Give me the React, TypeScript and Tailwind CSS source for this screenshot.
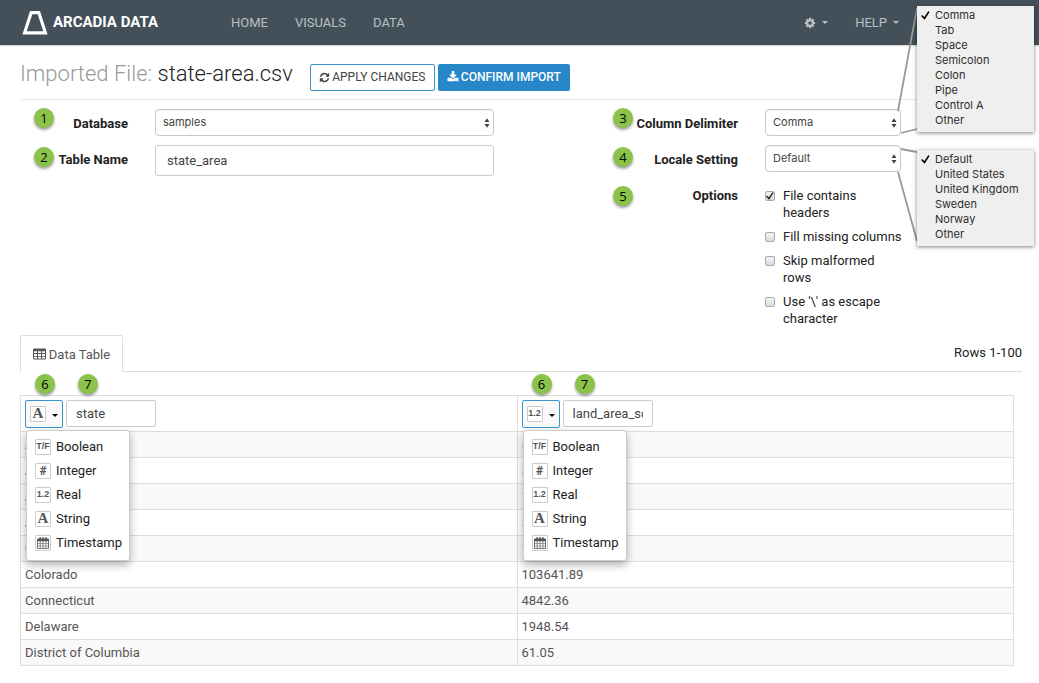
import React from "react";

const GEAR =
  "M1152 896q0-106-75-181t-181-75-181 75-75 181 75 181 181 75 181-75 75-181zm512-109v222q0 12-8 23t-20 13l-185 28q-19 54-39 91 35 50 107 138 10 12 10 25t-9 23q-27 37-99 108t-94 71q-12 0-26-9l-138-108q-44 23-91 38-16 136-29 186-7 28-36 28h-222q-14 0-24.5-8.5t-11.5-21.5l-28-184q-49-16-90-37l-141 107q-10 9-25 9-14 0-25-11-126-114-165-168-7-10-7-23 0-12 8-23 15-21 51-66.5t54-70.5q-27-50-41-99l-183-27q-13-2-21-12.5t-8-23.5v-222q0-12 8-23t19-13l186-28q14-46 39-92-40-57-107-138-10-12-10-24 0-10 9-23 26-36 98.5-107.5t94.5-71.5q13 0 26 10l138 107q44-23 91-38 16-136 29-186 7-28 36-28h222q14 0 24.5 8.5t11.5 21.5l28 184q49 16 90 37l142-107q9-9 24-9 13 0 25 10 129 119 165 170 7 8 7 22 0 12-8 23-15 21-51 66.5t-54 70.5q26 50 41 98l183 28q13 2 21 12.5t8 23.5z";
const REFRESH =
  "M1639 1056q0 5-1 7-64 268-268 434.5t-478 166.5q-146 0-282.5-55t-243.5-157l-129 129q-19 19-45 19t-45-19-19-45v-448q0-26 19-45t45-19h448q26 0 45 19t19 45-19 45l-137 137q71 66 161 102t187 36q134 0 250-65t186-179q11-17 53-117 8-23 30-23h192q13 0 22.5 9.5t9.5 22.5zm25-800v448q0 26-19 45t-45 19h-448q-26 0-45-19t-19-45 19-45l138-138q-148-137-349-137-134 0-250 65t-186 179q-11 17-53 117-8 23-30 23h-199q-13 0-22.5-9.5t-9.5-22.5v-7q65-268 270-434.5t480-166.5q146 0 284 55.5t245 156.5l130-129q19-19 45-19t45 19 19 45z";
const DOWNLOAD =
  "M1344 1344q0-26-19-45t-45-19-45 19-19 45 19 45 45 19 45-19 19-45zm256 0q0-26-19-45t-45-19-45 19-19 45 19 45 45 19 45-19 19-45zm128-224v320q0 40-28 68t-68 28h-1472q-40 0-68-28t-28-68v-320q0-40 28-68t68-28h465l135 136q58 56 136 56t136-56l136-136h464q40 0 68 28t28 68zm-325-569q17 41-14 70l-448 448q-18 19-45 19t-45-19l-448-448q-31-29-14-70 17-39 59-39h256v-448q0-26 19-45t45-19h256q26 0 45 19t19 45v448h256q42 0 59 39z";

function Glyph({ d, className }: { d: string; className: string }) {
  return (
    <svg viewBox="0 0 1792 1792" fill="currentColor" className={className} aria-hidden="true">
      <path d={d} />
    </svg>
  );
}

function Caret({ className }: { className: string }) {
  return (
    <svg viewBox="0 0 6 3" fill="currentColor" className={className} aria-hidden="true">
      <path d="M0 0h6L3 3z" />
    </svg>
  );
}

function Tick({ className }: { className: string }) {
  return (
    <svg viewBox="0 0 10 10" fill="none" stroke="currentColor" strokeWidth="1.8" className={className} aria-hidden="true">
      <path d="M1.3 5.6 3.8 8.4 8.4 1.2" strokeLinecap="round" strokeLinejoin="round" />
    </svg>
  );
}

function TableIcon() {
  return (
    <svg viewBox="0 0 13 12" className="h-3 w-[13px]" aria-hidden="true">
      <path
        fill="currentColor"
        fillRule="evenodd"
        d="M1 .5h11a1 1 0 0 1 1 1v9a1 1 0 0 1-1 1H1a1 1 0 0 1-1-1v-9a1 1 0 0 1 1-1zM1 3.2v1.9h3V3.2zm4 0v1.9h3V3.2zm4 0v1.9h3V3.2zM1 6v1.9h3V6zm4 0v1.9h3V6zm4 0v1.9h3V6zM1 8.8v1.8h3V8.800zm4 0v1.800h3V8.800zm4 0v1.800h3V8.800z"
      />
    </svg>
  );
}

function CalendarIcon() {
  return (
    <svg viewBox="0 0 12 12" className="h-3 w-3" aria-hidden="true">
      <path
        fill="currentColor"
        fillRule="evenodd"
        d="M2.300.8a.8.8 0 0 1 1.600 0v.8h1.300V.8a.8.8 0 0 1 1.600 0v.8h1.300V.8a.8.8 0 0 1 1.600 0v.8H11a1 1 0 0 1 1 1V11a1 1 0 0 1-1 1H1a1 1 0 0 1-1-1V2.600a1 1 0 0 1 1-1h1.300zM.8 4.300v1.900h2V4.300zm2.700 0v1.900h2.200V4.300zm2.900 0v1.900h2.200V4.300zm2.900 0v1.900h1.900V4.300zM.8 6.800v1.900h2V6.800zm2.700 0v1.900h2.200V6.800zm2.900 0v1.900h2.200V6.800zm2.900 0v1.900h1.900V6.800zM.8 9.300v1.900h2V9.300zm2.700 0v1.900h2.200V9.300zm2.900 0v1.900h2.200V9.300zm2.900 0v1.900h1.900V9.300z"
      />
    </svg>
  );
}

function Badge({ n }: { n: number }) {
  return (
    <span className="flex size-5 shrink-0 items-center justify-center rounded-full bg-[#8bc34a] font-['Open_Sans',sans-serif] text-[13px] font-normal leading-5 text-black shadow-[0_2px_3px_rgba(0,0,0,0.4)]">
      {n}
    </span>
  );
}

function Select({ id, options }: { id: string; options: string[] }) {
  return (
    <div className="relative">
      <select
        id={id}
        className="block h-[27px] w-full appearance-none rounded-[4px] border border-[#c8c8c8] bg-white pl-[7px] pr-5 font-[Inter,sans-serif] text-[11px] text-[#444] shadow-[inset_0_1px_1px_rgba(0,0,0,0.06)]"
      >
        {options.map((o) => (
          <option key={o}>{o}</option>
        ))}
      </select>
      <svg viewBox="0 0 6 10" fill="#444" className="pointer-events-none absolute right-1 top-[9px] h-2.5 w-1.5" aria-hidden="true">
        <path d="M.5 4h5L3 .2zM.5 6h5L3 9.800z" />
      </svg>
    </div>
  );
}

function Popup({ options }: { options: string[] }) {
  return (
    <ul className="w-[117px] bg-[#efefef] pb-1 pt-0.5 font-[Inter,sans-serif] text-[11px] leading-[15px] text-[#2d2d2d] shadow-[0_1px_4px_rgba(0,0,0,0.5)]">
      {options.map((o, i) => (
        <li key={o} className="flex h-[15px] items-center pl-1">
          <span className="w-3.5">{i === 0 && <Tick className="size-[9px] text-black" />}</span>
          {o}
        </li>
      ))}
    </ul>
  );
}

const delimiters = ["Comma", "Tab", "Space", "Semicolon", "Colon", "Pipe", "Control A", "Other"];
const locales = ["Default", "United States", "United Kingdom", "Sweden", "Norway", "Other"];

const checks = [
  { label: "File contains headers", on: true },
  { label: "Fill missing columns", on: false },
  { label: "Skip malformed rows", on: false },
  { label: "Use '\\' as escape character", on: false },
];

type Kind = "Boolean" | "Integer" | "Real" | "String" | "Timestamp";
const kinds: Kind[] = ["Boolean", "Integer", "Real", "String", "Timestamp"];

function KindIcon({ kind }: { kind: Kind }) {
  return (
    <span className="flex size-4 shrink-0 items-center justify-center rounded-[1px] border border-[#ccc] bg-white leading-none text-[#555]">
      {kind === "Boolean" && <span className="font-['Liberation_Sans_Narrow','Liberation_Sans',sans-serif] text-[9px] font-bold">T/F</span>}
      {kind === "Integer" && <span className="text-xs font-bold">#</span>}
      {kind === "Real" && <span className="font-['Liberation_Sans_Narrow','Liberation_Sans',sans-serif] text-[9px] font-bold">1.2</span>}
      {kind === "String" && <span className="font-['Liberation_Serif',serif] text-[15px] font-bold">A</span>}
      {kind === "Timestamp" && <CalendarIcon />}
    </span>
  );
}

function ColumnHead({ kind, name }: { kind: Kind; name: string }) {
  return (
    <div className="relative flex items-center gap-[3px]">
      <div className="absolute -top-[26px] left-2.5 flex gap-[23px]">
        <Badge n={6} />
        <Badge n={7} />
      </div>
      <button
        type="button"
        aria-label={`Type of ${name}`}
        className="flex h-7 w-[38px] items-center gap-1.5 rounded-[2px] border border-[#3a94d0] bg-[#fafafa] pl-1"
      >
        <KindIcon kind={kind} />
        <Caret className="mt-1 h-[3px] w-1.5 text-black" />
      </button>
      <input
        aria-label="Column name"
        defaultValue={name}
        className="h-[27px] w-[90px] rounded-[2px] border border-[#ccc] bg-white px-[9px] text-[13px] font-normal text-[#444]"
      />
      <ul className="absolute left-px top-full z-10 mt-0.5 flex w-[104px] flex-col gap-2 rounded-[3px] border border-[#ccc] bg-white pb-[9px] pt-2 pl-2 shadow-[0_4px_8px_rgba(0,0,0,0.3)]">
        {kinds.map((k) => (
          <li key={k} className="flex h-4 items-center gap-[5px] text-[13px] font-normal text-[#222]">
            <KindIcon kind={k} />
            {k}
          </li>
        ))}
      </ul>
    </div>
  );
}

const rows = [
  ["Alabama", "50645.33"],
  ["Alaska", "570640.95"],
  ["Arizona", "113594.08"],
  ["Arkansas", "52035.48"],
  ["California", "155779.22"],
  ["Colorado", "103641.89"],
  ["Connecticut", "4842.36"],
  ["Delaware", "1948.54"],
  ["District of Columbia", "61.05"],
];

export default function App() {
  return (
    <div className="min-h-screen bg-white font-[Roboto,sans-serif] text-[13px] leading-[17px] text-[#222]">
      <header className="flex h-[45px] items-center bg-[#435059] pl-[22px] text-[13px] text-[#b9c0c4] shadow-[0_1px_1px_rgba(0,0,0,0.15)]">
        <a href="#" className="flex w-[209px] items-center gap-[5px] text-[15px] font-bold text-white">
          <svg viewBox="0 0 26 26" fill="none" stroke="currentColor" className="size-[26px]" aria-hidden="true">
            <path d="M9.200 2.600h7.600l6.600 20.200H2.600z" strokeWidth="3.200" />
          </svg>
          ARCADIA DATA
        </a>
        <nav className="flex flex-1 gap-[27px]">
          <a href="#">HOME</a>
          <a href="#">VISUALS</a>
          <a href="#">DATA</a>
        </nav>
        <div className="flex items-center gap-[27px] pr-[140px]">
          <button type="button" aria-label="Settings" className="flex items-center gap-1.5">
            <Glyph d={GEAR} className="size-3" />
            <Caret className="h-[3px] w-1.5" />
          </button>
          <button type="button" className="flex items-center gap-1.5">
            HELP
            <Caret className="h-[3px] w-1.5" />
          </button>
        </div>
      </header>

      <main className="pl-5 pr-[17px]">
        <div className="flex h-[55px] items-center border-b border-[#eaeaea]">
          <h1 className="mr-[17px] mt-1 text-[22px] font-light leading-7 text-[#999]">
            Imported File: <span className="text-[#222]">state-area.csv</span>
          </h1>
          <div className="mt-2.5 flex gap-[3px] text-xs">
            <button type="button" className="flex h-[27px] w-[125px] items-center justify-center gap-0.5 rounded-[2px] border border-[#3a94d0] text-[#444]">
              <Glyph d={REFRESH} className="size-[11px]" />
              APPLY CHANGES
            </button>
            <button type="button" className="flex h-[27px] w-[132px] items-center justify-center gap-0.5 rounded-[2px] bg-[#2787c8] font-medium text-white">
              <Glyph d={DOWNLOAD} className="size-3" />
              CONFIRM IMPORT
            </button>
          </div>
        </div>

        <form className="flex pt-2">
          <section className="flex flex-1 pl-3.5">
            <div className="flex flex-col gap-[19px]">
              <Badge n={1} />
              <Badge n={2} />
            </div>
            <div className="flex-1">
              <div className="flex h-9 gap-[27px]">
                <label htmlFor="database" className="mt-[7px] w-[74px] text-right font-bold">Database</label>
                <div className="mt-px flex-1">
                  <Select id="database" options={["samples"]} />
                </div>
              </div>
              <div className="flex h-9 gap-[27px]">
                <label htmlFor="table-name" className="mt-[7px] w-[74px] text-right font-bold">Table Name</label>
                <input
                  id="table-name"
                  defaultValue="state_area"
                  className="mt-px h-[31px] min-w-0 flex-1 rounded-[3px] border border-[#ccc] bg-white px-[11px] text-[13px] text-[#444]"
                />
              </div>
            </div>
          </section>

          <section className="ml-[119px] flex w-[409px]">
            <div className="flex flex-col gap-[19px]">
              <Badge n={3} />
              <Badge n={4} />
              <Badge n={5} />
            </div>
            <div>
              <div className="flex h-9 gap-[27px]">
                <label htmlFor="delimiter" className="mt-[7px] w-[105px] text-right font-bold">Column Delimiter</label>
                <div className="relative mt-px w-[136px]">
                  <Select id="delimiter" options={delimiters} />
                  <div className="absolute -top-[103px] left-full z-10 flex items-start">
                    <svg viewBox="0 0 16 128" fill="none" stroke="#999" strokeWidth="1.800" className="h-32 w-4 overflow-visible" aria-hidden="true">
                      <path d="M-3 105 16 2M0 127l16-4" />
                    </svg>
                    <Popup options={delimiters} />
                  </div>
                </div>
              </div>
              <div className="flex h-9 gap-[27px]">
                <label htmlFor="locale" className="mt-[7px] w-[105px] text-right font-bold">Locale Setting</label>
                <div className="relative mt-px w-[136px]">
                  <Select id="locale" options={locales} />
                  <div className="absolute left-full top-[5px] z-10 flex items-start">
                    <svg viewBox="0 0 16 94" fill="none" stroke="#999" strokeWidth="1.800" className="h-[94px] w-4 overflow-visible" aria-hidden="true">
                      <path d="M0-1l16 3M-3 22l19 69" />
                    </svg>
                    <Popup options={locales} />
                  </div>
                </div>
              </div>
              <fieldset className="flex gap-[27px] pt-[7px]">
                <div className="w-[105px] text-right font-bold">Options</div>
                <div className="flex w-[140px] flex-col gap-[7px]">
                  {checks.map((c) => (
                    <label key={c.label} className="relative flex items-start gap-2">
                      <input
                        type="checkbox"
                        defaultChecked={c.on}
                        className="mt-1 size-2.5 shrink-0 appearance-none rounded-[2px] border border-[#aaa] bg-linear-to-b from-[#f4f4f4] to-[#dcdcdc]"
                      />
                      {c.on && <Tick className="absolute left-px top-[5px] size-2 text-[#222]" />}
                      <span>{c.label}</span>
                    </label>
                  ))}
                </div>
              </fieldset>
            </div>
          </section>
        </form>

        <div className="mt-2 flex h-[37px] items-stretch justify-between border-b border-[#ddd]">
          <button
            type="button"
            className="-mb-px flex w-[103px] items-center justify-center gap-[3px] rounded-t-[3px] border border-b-0 border-[#ddd] bg-white text-[#555]"
          >
            <TableIcon />
            Data Table
          </button>
          <span className="pt-[9px]">Rows 1-100</span>
        </div>

        <div className="pb-[17px] pr-2 pt-[23px]">
          <table className="w-full table-fixed border-collapse text-left text-[#555]">
            <thead>
              <tr className="h-9">
                <th className="border border-[#ddd] px-1 py-0">
                  <ColumnHead kind="String" name="state" />
                </th>
                <th className="border border-[#ddd] px-1 py-0">
                  <ColumnHead kind="Real" name="land_area_sqmi" />
                </th>
              </tr>
            </thead>
            <tbody>
              {rows.map(([state, area]) => (
                <tr key={state} className="h-[26px] odd:bg-[#f9f9f9]">
                  <td className="border border-[#ddd] px-1 py-0">{state}</td>
                  <td className="border border-[#ddd] px-1 py-0">{area}</td>
                </tr>
              ))}
            </tbody>
          </table>
        </div>
      </main>
    </div>
  );
}
